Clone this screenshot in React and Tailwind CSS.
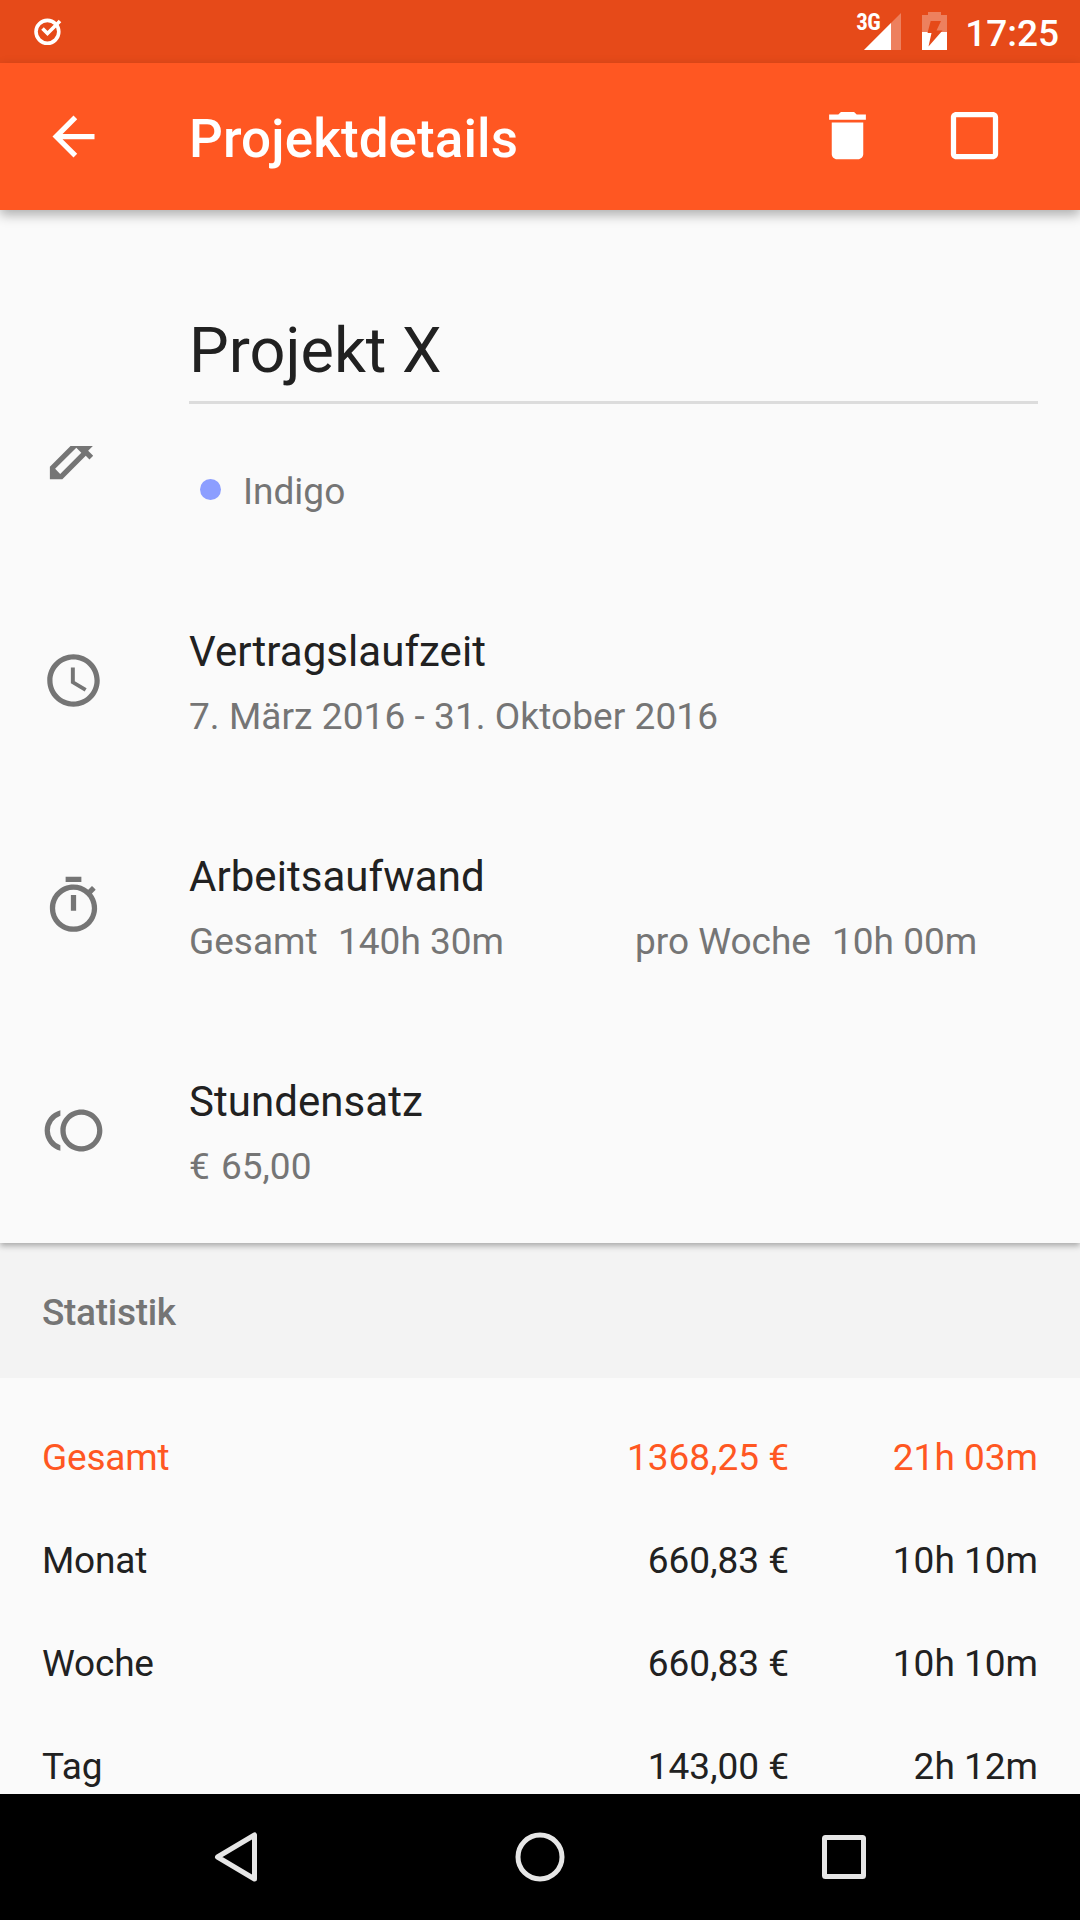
import React from 'react'
import { MdAccessTime, MdArrowBack, MdCheckBoxOutlineBlank, MdColorize, MdDelete, MdOutlineTimer, MdToll } from 'react-icons/md'

const stats = [
  { label: 'Gesamt', amount: '1368,25 €', time: '21h 03m', active: true },
  { label: 'Monat', amount: '660,83 €', time: '10h 10m' },
  { label: 'Woche', amount: '660,83 €', time: '10h 10m' },
  { label: 'Tag', amount: '143,00 €', time: '2h 12m' },
]

function StatusBar() {
  return (
    <div className="flex h-[63px] items-start bg-[#e64a19] text-white">
      <svg className="ml-[34px] mt-[18px]" width="28" height="28" viewBox="0 0 28 28" fill="none" stroke="#fff" strokeWidth="3.6">
        <circle cx="13.4" cy="13.8" r="11.4" />
        <path d="M8.500 10.500l5 5L26 3" />
      </svg>
      <div className="flex-1" />
      <span className="mt-[11px] w-[8px] font-['Roboto_Condensed',Roboto,sans-serif] text-[23px] leading-[23px] font-bold tracking-[-0.5px]">3G</span>
      <svg className="mt-[13px]" width="37" height="37" viewBox="0 0 37 37">
        <path d="M37 0v37H0z" fill="#fff" fillOpacity=".3" />
        <path d="M27 10v27H0z" fill="#fff" />
      </svg>
      <svg className="ml-[21px] mt-[12px]" width="25" height="38" viewBox="0 0 25 38">
        <path d="M6 0h13v3h6v17H0V3h6z" fill="#fff" fillOpacity=".3" />
        <path d="M0 20h25v18H0z" fill="#fff" />
        <path d="M8.700 9H19l-4.500 9.500h6L6.500 34.500 9.500 21H5.500z" fill="#e64a19" />
      </svg>
      <span className="ml-[18px] mr-[21px] mt-[12px] text-[37px] leading-[44px] font-medium">17:25</span>
    </div>
  )
}

function Toolbar() {
  return (
    <header className="relative z-10 flex h-[147px] items-center bg-[#ff5722] pl-[42px] pr-[74px] text-white shadow-[0_5px_11px_rgba(0,0,0,0.3)]">
      <MdArrowBack size={63} />
      <h1 className="ml-[84px] flex-1 pt-[4px] text-[53px] leading-[62px] font-medium tracking-[0.1px]">Projektdetails</h1>
      <MdDelete className="mb-[2px]" size={63} />
      <MdCheckBoxOutlineBlank className="mb-[2px] ml-[64px]" size={63} />
    </header>
  )
}

function Detail({ icon: Icon, title, children }) {
  return (
    <section className="flex h-[225px] pl-[42px]">
      <Icon className="mt-[31px] shrink-0 text-[#757575]" size={63} />
      <div className="ml-[84px] flex-1 pt-[9px]">
        <h2 className="text-[42px] leading-[50px] tracking-[0.05px] text-[#212121]">{title}</h2>
        <div className="mt-[18px] flex text-[37px] leading-[44px] text-[#757575]">{children}</div>
      </div>
    </section>
  )
}

function NavBar() {
  return (
    <nav className="flex h-[126px] bg-black">
      <svg width="1080" height="126" viewBox="0 0 1080 126" fill="none" stroke="#e6e6e6" strokeWidth="5" strokeLinejoin="round">
        <path d="M254.500 41v44L217.500 63z" />
        <circle cx="540" cy="63" r="22" />
        <rect x="824.500" y="43.500" width="39" height="39" rx="1" />
      </svg>
    </nav>
  )
}

export default function App() {
  return (
    <div className="flex h-[1920px] w-[1080px] flex-col overflow-hidden bg-[#fafafa] font-[Roboto,sans-serif]">
      <StatusBar />
      <Toolbar />
      <main className="flex min-h-0 flex-1 flex-col overflow-hidden">
        <div className="relative h-[1033px] shrink-0 bg-[#fafafa] shadow-[0_3px_6px_rgba(0,0,0,0.3)]">
          <div className="ml-[189px] mr-[42px] h-[194px] border-b-3 border-[#dcdcdc] pt-[104px] text-[63px] leading-[74px] text-[#212121]">
            Projekt X
          </div>
          <div className="flex h-[214px] pl-[42px] pt-[42px] text-[#757575]">
            <div className="flex h-[41px] w-[63px] items-end overflow-hidden">
              <MdColorize className="shrink-0" size={63} />
            </div>
            <div className="ml-[95px] mt-[33px] size-[21px] rounded-full bg-[#8c9eff]" />
            <span className="ml-[22px] mt-[24px] text-[37px] leading-[44px]">Indigo</span>
          </div>
          <Detail icon={MdAccessTime} title="Vertragslaufzeit">
            <span className="tracking-[0.07px]">7. März 2016 - 31. Oktober 2016</span>
          </Detail>
          <Detail icon={MdOutlineTimer} title="Arbeitsaufwand">
            <span className="w-[149px]">Gesamt</span>
            <span className="w-[297px]">140h 30m</span>
            <span className="w-[197px]">pro Woche</span>
            <span>10h 00m</span>
          </Detail>
          <Detail icon={MdToll} title="Stundensatz">
            <span className="w-[32px]">€</span>
            <span>65,00</span>
          </Detail>
        </div>
        <h2 className="flex h-[135px] shrink-0 items-center bg-[#f3f3f3] px-[42px] pt-[4px] text-[37px] font-medium tracking-[-0.3px] text-[#757575]">Statistik</h2>
        <div className="pt-[58px]">
          {stats.map((row) => (
            <div
              key={row.label}
              className={`flex h-[103px] px-[42px] text-[37px] leading-[44px] ${row.active ? 'text-[#ff5722]' : 'text-[#212121]'}`}
            >
              <span className="flex-1 tracking-[-0.2px]">{row.label}</span>
              <span className="text-right">{row.amount}</span>
              <span className="w-[249px] text-right">{row.time}</span>
            </div>
          ))}
        </div>
      </main>
      <NavBar />
    </div>
  )
}
